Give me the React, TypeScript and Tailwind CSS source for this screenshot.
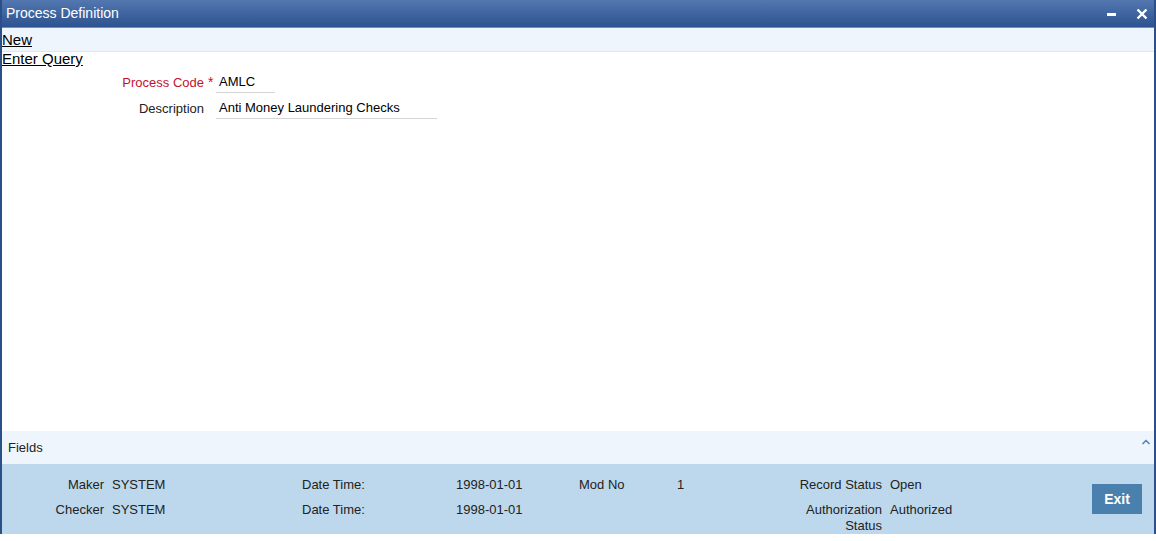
import { ChevronUp } from "lucide-react";

const font = { fontFamily: '"Liberation Sans", Arial, sans-serif' };

function FooterRow({ children }: { children: React.ReactNode }) {
  return <div className="flex items-start">{children}</div>;
}

export default function App() {
  return (
    <div className="h-[541px] w-[1156px] bg-white text-[13px] text-[#222]" style={font}>
      <div className="flex h-[534px] flex-col border-x-2 border-[#2b4f88]">
        {/* title bar */}
        <div className="flex h-[28px] items-center justify-between border-b border-[#7b8fa9] bg-gradient-to-b from-[#5378b0] to-[#2c5290] pl-[4px] pr-[6px]">
          <span className="text-[14px] text-white">Process Definition</span>
          <div className="flex items-center gap-[20px]">
            <span className="mt-[2px] block h-[3px] w-[9px] bg-white" />
            <svg width="12" height="12" viewBox="0 0 12 12">
              <path d="M1.5 1.5 L10.5 10.5 M10.5 1.5 L1.5 10.5" stroke="white" strokeWidth="2.4" />
            </svg>
          </div>
        </div>

        {/* toolbar */}
        <div className="flex h-[24px] items-center border-b border-[#dfe5ec] bg-[#eef5fd]">
          <span className="text-[15px] leading-none text-black underline">New</span>
        </div>

        {/* content */}
        <div className="flex-1">
          <div className="text-[15px] leading-[14px] text-black underline">Enter Query</div>
          <div className="mt-[6px] flex flex-col gap-[5px]">
            <div className="flex items-center">
              <span className="w-[202px] text-right text-[#c8102e]">Process Code</span>
              <span className="w-[12px] pl-[4px] text-[14px] text-[#c8102e]">*</span>
              <div className="flex h-[21px] w-[59px] items-center border-b border-[#d5d5d5] pl-[3px] text-black">AMLC</div>
            </div>
            <div className="flex items-center">
              <span className="w-[202px] text-right">Description</span>
              <span className="w-[12px]" />
              <div className="flex h-[21px] w-[221px] items-center border-b border-[#d5d5d5] pl-[3px] text-black">
                Anti Money Laundering Checks
              </div>
            </div>
          </div>
        </div>

        {/* fields bar */}
        <div className="flex h-[33px] items-center justify-between bg-[#eef5fd] pl-[6px] pr-[2px]">
          <span>Fields</span>
          <ChevronUp className="mb-[12px] h-[12px] w-[12px] text-[#5b86bd]" strokeWidth={3.5} />
        </div>

        {/* footer */}
        <div className="flex h-[70px] items-center justify-between bg-[#bdd8ec] pr-[12px]">
          <div className="flex flex-col gap-[9px] self-start pt-[13px] leading-[16px]">
            <FooterRow>
              <span className="w-[102px] text-right">Maker</span>
              <span className="w-[198px] pl-[8px]">SYSTEM</span>
              <span className="w-[154px]">Date Time:</span>
              <span className="w-[123px]">1998-01-01</span>
              <span className="w-[98px]">Mod No</span>
              <span className="w-[115px]">1</span>
              <span className="w-[90px] text-right">Record Status</span>
              <span className="pl-[8px]">Open</span>
            </FooterRow>
            <FooterRow>
              <span className="w-[102px] text-right">Checker</span>
              <span className="w-[198px] pl-[8px]">SYSTEM</span>
              <span className="w-[154px]">Date Time:</span>
              <span className="w-[123px]">1998-01-01</span>
              <span className="w-[98px]" />
              <span className="w-[115px]" />
              <span className="w-[90px] text-right">Authorization Status</span>
              <span className="pl-[8px]">Authorized</span>
            </FooterRow>
          </div>
          <button
            type="button"
            className="h-[30px] w-[50px] bg-[#4a80ad] text-[14px] font-bold text-white"
          >
            Exit
          </button>
        </div>
      </div>
    </div>
  );
}
